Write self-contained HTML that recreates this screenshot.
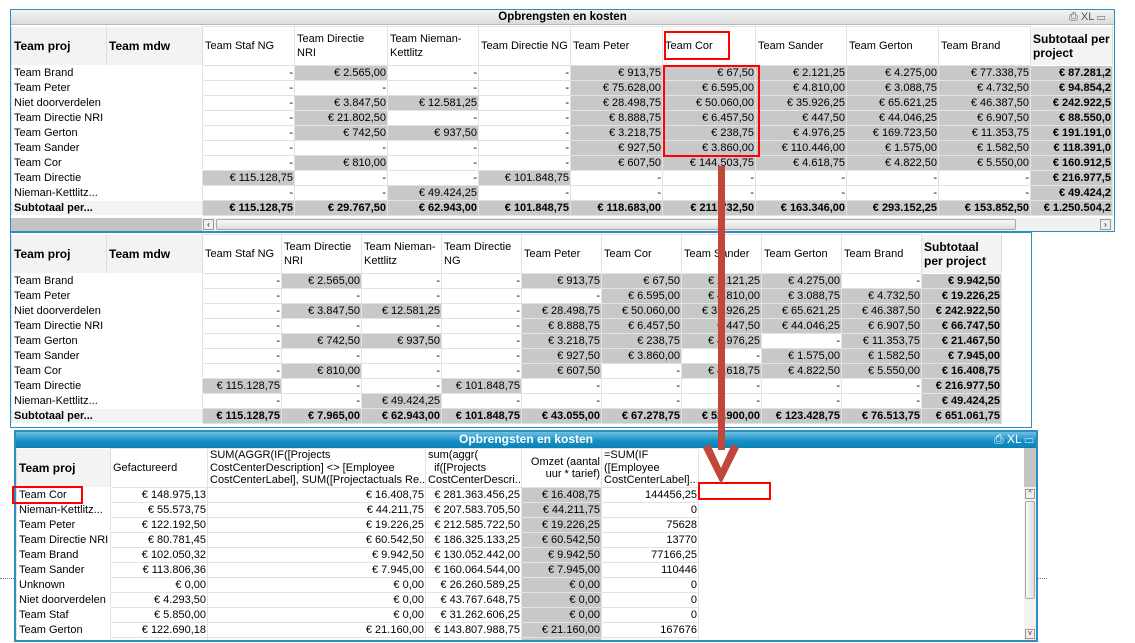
<!DOCTYPE html>
<html><head><meta charset="utf-8">
<style>
*{margin:0;padding:0;box-sizing:border-box}
body{width:1135px;height:643px;background:#fff;position:relative;overflow:hidden;font-family:"Liberation Sans",sans-serif;font-size:11px;color:#000}
.abs{position:absolute}
table{border-collapse:collapse;table-layout:fixed;position:absolute}
td{height:15px;line-height:14px;border:1px solid #e2e2e2;padding:0 1px;white-space:nowrap;overflow:hidden;text-align:right;background:#fff}
td.l{text-align:left;padding-left:2px;border-color:#fff #e2e2e2}
td.g{background:#c8c8c8;border-color:#e4e4e4}
td.b{font-weight:bold}
tr.h td{height:39px;text-align:left;vertical-align:middle;white-space:normal;line-height:14px;padding-left:2px;background:#fff}
tr.h td div{max-height:38px;overflow:hidden}
tr.h td.hh{background:#f3f3f3;font-weight:bold;font-size:12px;border-color:#fff #ddd}
tr.s td{font-weight:bold;background:#c8c8c8}
tr.s td.l{background:#f3f3f3}
.frame{position:absolute;border:1px solid #2a8fc0}
.red{position:absolute;border:2px solid #f00}
.t3 tr.h td div{white-space:nowrap;line-height:12.5px}
</style></head><body>

<!-- Table 1 -->
<div class="frame" style="left:10px;top:9px;width:1105px;height:223px"></div>
<div class="abs" style="left:11px;top:10px;width:1103px;height:15px;background:linear-gradient(#f4f4f4,#dcdcdc);border-bottom:1px solid #b8b8b8;text-align:center;font-weight:bold;font-size:11.5px;line-height:14px">Opbrengsten en kosten</div>
<div class="abs" style="left:1069px;top:10px;font-size:11px;color:#555;line-height:14px">⎙ XL ▭</div>
<table style="left:11px;top:26px;width:1101px">
<colgroup><col style="width:95px"><col style="width:96px"><col style="width:92px"><col style="width:93px"><col style="width:91px"><col style="width:92px"><col style="width:92px"><col style="width:93px"><col style="width:91px"><col style="width:92px"><col style="width:92px"><col style="width:82px"></colgroup>
<tr class="h"><td class="hh">Team proj</td><td class="hh">Team mdw</td><td>Team Staf NG</td><td>Team Directie NRI</td><td>Team Nieman-Kettlitz</td><td>Team Directie NG</td><td>Team Peter</td><td>Team Cor</td><td>Team Sander</td><td>Team Gerton</td><td>Team Brand</td><td class="hh">Subtotaal per project</td></tr>
<tr><td class="l" colspan="2">Team Brand</td><td>-</td><td class="g">€ 2.565,00</td><td>-</td><td>-</td><td class="g">€ 913,75</td><td class="g">€ 67,50</td><td class="g">€ 2.121,25</td><td class="g">€ 4.275,00</td><td class="g">€ 77.338,75</td><td class="g b">€ 87.281,2</td></tr>
<tr><td class="l" colspan="2">Team Peter</td><td>-</td><td>-</td><td>-</td><td>-</td><td class="g">€ 75.628,00</td><td class="g">€ 6.595,00</td><td class="g">€ 4.810,00</td><td class="g">€ 3.088,75</td><td class="g">€ 4.732,50</td><td class="g b">€ 94.854,2</td></tr>
<tr><td class="l" colspan="2">Niet doorverdelen</td><td>-</td><td class="g">€ 3.847,50</td><td class="g">€ 12.581,25</td><td>-</td><td class="g">€ 28.498,75</td><td class="g">€ 50.060,00</td><td class="g">€ 35.926,25</td><td class="g">€ 65.621,25</td><td class="g">€ 46.387,50</td><td class="g b">€ 242.922,5</td></tr>
<tr><td class="l" colspan="2">Team Directie NRI</td><td>-</td><td class="g">€ 21.802,50</td><td>-</td><td>-</td><td class="g">€ 8.888,75</td><td class="g">€ 6.457,50</td><td class="g">€ 447,50</td><td class="g">€ 44.046,25</td><td class="g">€ 6.907,50</td><td class="g b">€ 88.550,0</td></tr>
<tr><td class="l" colspan="2">Team Gerton</td><td>-</td><td class="g">€ 742,50</td><td class="g">€ 937,50</td><td>-</td><td class="g">€ 3.218,75</td><td class="g">€ 238,75</td><td class="g">€ 4.976,25</td><td class="g">€ 169.723,50</td><td class="g">€ 11.353,75</td><td class="g b">€ 191.191,0</td></tr>
<tr><td class="l" colspan="2">Team Sander</td><td>-</td><td>-</td><td>-</td><td>-</td><td class="g">€ 927,50</td><td class="g">€ 3.860,00</td><td class="g">€ 110.446,00</td><td class="g">€ 1.575,00</td><td class="g">€ 1.582,50</td><td class="g b">€ 118.391,0</td></tr>
<tr><td class="l" colspan="2">Team Cor</td><td>-</td><td class="g">€ 810,00</td><td>-</td><td>-</td><td class="g">€ 607,50</td><td class="g">€ 144.503,75</td><td class="g">€ 4.618,75</td><td class="g">€ 4.822,50</td><td class="g">€ 5.550,00</td><td class="g b">€ 160.912,5</td></tr>
<tr><td class="l" colspan="2">Team Directie</td><td class="g">€ 115.128,75</td><td>-</td><td>-</td><td class="g">€ 101.848,75</td><td>-</td><td>-</td><td>-</td><td>-</td><td>-</td><td class="g b">€ 216.977,5</td></tr>
<tr><td class="l" colspan="2">Nieman-Kettlitz...</td><td>-</td><td>-</td><td class="g">€ 49.424,25</td><td>-</td><td>-</td><td>-</td><td>-</td><td>-</td><td>-</td><td class="g b">€ 49.424,2</td></tr>
<tr class="s"><td class="l" colspan="2">Subtotaal per...</td><td>€ 115.128,75</td><td>€ 29.767,50</td><td>€ 62.943,00</td><td>€ 101.848,75</td><td>€ 118.683,00</td><td>€ 211.732,50</td><td>€ 163.346,00</td><td>€ 293.152,25</td><td>€ 153.852,50</td><td>€ 1.250.504,2</td></tr>
</table>
<div class="abs" style="left:11px;top:218px;width:191px;height:13px;background:#c4c4c4"></div>
<div class="abs" style="left:202px;top:218px;width:911px;height:13px;background:#f0f0f0"></div>
<div class="abs" style="left:203px;top:219px;width:11px;height:11px;border:1px solid #999;background:#eee;font-size:8px;line-height:9px;text-align:center">‹</div>
<div class="abs" style="left:216px;top:219px;width:800px;height:11px;border:1px solid #aaa;border-radius:2px;background:linear-gradient(#fafafa,#ddd)"></div>
<div class="abs" style="left:1100px;top:219px;width:11px;height:11px;border:1px solid #999;background:#eee;font-size:8px;line-height:9px;text-align:center">›</div>

<!-- Table 2 -->
<div class="frame" style="left:10px;top:232px;width:1022px;height:196px"></div>
<table style="left:11px;top:234px;width:990px">
<colgroup><col style="width:95px"><col style="width:96px"><col style="width:79px"><col style="width:80px"><col style="width:80px"><col style="width:80px"><col style="width:80px"><col style="width:80px"><col style="width:80px"><col style="width:80px"><col style="width:80px"><col style="width:80px"></colgroup>
<tr class="h"><td class="hh">Team proj</td><td class="hh">Team mdw</td><td>Team Staf NG</td><td>Team Directie NRI</td><td>Team Nieman-Kettlitz</td><td>Team Directie NG</td><td>Team Peter</td><td>Team Cor</td><td>Team Sander</td><td>Team Gerton</td><td>Team Brand</td><td class="hh">Subtotaal per project</td></tr>
<tr><td class="l" colspan="2">Team Brand</td><td>-</td><td class="g">€ 2.565,00</td><td>-</td><td>-</td><td class="g">€ 913,75</td><td class="g">€ 67,50</td><td class="g">€ 2.121,25</td><td class="g">€ 4.275,00</td><td>-</td><td class="g b">€ 9.942,50</td></tr>
<tr><td class="l" colspan="2">Team Peter</td><td>-</td><td>-</td><td>-</td><td>-</td><td>-</td><td class="g">€ 6.595,00</td><td class="g">€ 4.810,00</td><td class="g">€ 3.088,75</td><td class="g">€ 4.732,50</td><td class="g b">€ 19.226,25</td></tr>
<tr><td class="l" colspan="2">Niet doorverdelen</td><td>-</td><td class="g">€ 3.847,50</td><td class="g">€ 12.581,25</td><td>-</td><td class="g">€ 28.498,75</td><td class="g">€ 50.060,00</td><td class="g">€ 35.926,25</td><td class="g">€ 65.621,25</td><td class="g">€ 46.387,50</td><td class="g b">€ 242.922,50</td></tr>
<tr><td class="l" colspan="2">Team Directie NRI</td><td>-</td><td>-</td><td>-</td><td>-</td><td class="g">€ 8.888,75</td><td class="g">€ 6.457,50</td><td class="g">€ 447,50</td><td class="g">€ 44.046,25</td><td class="g">€ 6.907,50</td><td class="g b">€ 66.747,50</td></tr>
<tr><td class="l" colspan="2">Team Gerton</td><td>-</td><td class="g">€ 742,50</td><td class="g">€ 937,50</td><td>-</td><td class="g">€ 3.218,75</td><td class="g">€ 238,75</td><td class="g">€ 4.976,25</td><td>-</td><td class="g">€ 11.353,75</td><td class="g b">€ 21.467,50</td></tr>
<tr><td class="l" colspan="2">Team Sander</td><td>-</td><td>-</td><td>-</td><td>-</td><td class="g">€ 927,50</td><td class="g">€ 3.860,00</td><td>-</td><td class="g">€ 1.575,00</td><td class="g">€ 1.582,50</td><td class="g b">€ 7.945,00</td></tr>
<tr><td class="l" colspan="2">Team Cor</td><td>-</td><td class="g">€ 810,00</td><td>-</td><td>-</td><td class="g">€ 607,50</td><td>-</td><td class="g">€ 4.618,75</td><td class="g">€ 4.822,50</td><td class="g">€ 5.550,00</td><td class="g b">€ 16.408,75</td></tr>
<tr><td class="l" colspan="2">Team Directie</td><td class="g">€ 115.128,75</td><td>-</td><td>-</td><td class="g">€ 101.848,75</td><td>-</td><td>-</td><td>-</td><td>-</td><td>-</td><td class="g b">€ 216.977,50</td></tr>
<tr><td class="l" colspan="2">Nieman-Kettlitz...</td><td>-</td><td>-</td><td class="g">€ 49.424,25</td><td>-</td><td>-</td><td>-</td><td>-</td><td>-</td><td>-</td><td class="g b">€ 49.424,25</td></tr>
<tr class="s"><td class="l" colspan="2">Subtotaal per...</td><td>€ 115.128,75</td><td>€ 7.965,00</td><td>€ 62.943,00</td><td>€ 101.848,75</td><td>€ 43.055,00</td><td>€ 67.278,75</td><td>€ 52.900,00</td><td>€ 123.428,75</td><td>€ 76.513,75</td><td>€ 651.061,75</td></tr>
</table>

<!-- Table 3 -->
<div class="abs" style="left:0;top:578px;width:14px;border-top:1px dotted #5a7fa0"></div>
<div class="abs" style="left:1037px;top:578px;width:10px;border-top:1px dotted #5a7fa0"></div>
<div class="frame" style="left:14px;top:430px;width:1024px;height:212px;border-width:2px"></div>
<div class="abs" style="left:16px;top:432px;width:1020px;height:16px;background:linear-gradient(#6cc0e4,#1890c4 55%,#0a80b8);color:#fff;text-align:center;font-weight:bold;font-size:12px;line-height:15px">Opbrengsten en kosten</div>
<div class="abs" style="left:994px;top:432px;color:#fff;font-size:12px;line-height:15px">⎙ XL ▭</div>
<div class="abs" style="left:16px;top:448px;width:1008px;height:192px;overflow:hidden">
<table class="t3" style="left:0;top:0;width:682px">
<colgroup><col style="width:94px"><col style="width:97px"><col style="width:218px"><col style="width:96px"><col style="width:80px"><col style="width:97px"></colgroup>
<tr class="h"><td class="hh">Team proj</td><td>Gefactureerd</td><td><div>SUM(AGGR(IF([Projects<br>CostCenterDescription] &lt;&gt; [Employee<br>CostCenterLabel], SUM([Projectactuals Re...</div></td><td><div>sum(aggr(<br>&nbsp;&nbsp;if([Projects<br>CostCenterDescri...</div></td><td style="text-align:right"><div style="text-align:right">Omzet (aantal<br>uur * tarief)</div></td><td><div>=SUM(IF<br>([Employee<br>CostCenterLabel]...</div></td></tr>
<tr><td class="l">Team Cor</td><td>€ 148.975,13</td><td>€ 16.408,75</td><td>€ 281.363.456,25</td><td class="g">€ 16.408,75</td><td>144456,25</td></tr>
<tr><td class="l">Nieman-Kettlitz...</td><td>€ 55.573,75</td><td>€ 44.211,75</td><td>€ 207.583.705,50</td><td class="g">€ 44.211,75</td><td>0</td></tr>
<tr><td class="l">Team Peter</td><td>€ 122.192,50</td><td>€ 19.226,25</td><td>€ 212.585.722,50</td><td class="g">€ 19.226,25</td><td>75628</td></tr>
<tr><td class="l">Team Directie NRI</td><td>€ 80.781,45</td><td>€ 60.542,50</td><td>€ 186.325.133,25</td><td class="g">€ 60.542,50</td><td>13770</td></tr>
<tr><td class="l">Team Brand</td><td>€ 102.050,32</td><td>€ 9.942,50</td><td>€ 130.052.442,00</td><td class="g">€ 9.942,50</td><td>77166,25</td></tr>
<tr><td class="l">Team Sander</td><td>€ 113.806,36</td><td>€ 7.945,00</td><td>€ 160.064.544,00</td><td class="g">€ 7.945,00</td><td>110446</td></tr>
<tr><td class="l">Unknown</td><td>€ 0,00</td><td>€ 0,00</td><td>€ 26.260.589,25</td><td class="g">€ 0,00</td><td>0</td></tr>
<tr><td class="l">Niet doorverdelen</td><td>€ 4.293,50</td><td>€ 0,00</td><td>€ 43.767.648,75</td><td class="g">€ 0,00</td><td>0</td></tr>
<tr><td class="l">Team Staf</td><td>€ 5.850,00</td><td>€ 0,00</td><td>€ 31.262.606,25</td><td class="g">€ 0,00</td><td>0</td></tr>
<tr><td class="l">Team Gerton</td><td>€ 122.690,18</td><td>€ 21.160,00</td><td>€ 143.807.988,75</td><td class="g">€ 21.160,00</td><td>167676</td></tr>
<tr><td class="l"></td><td></td><td></td><td></td><td class="g"></td><td></td></tr>
</table>
</div>
<div class="abs" style="left:1024px;top:448px;width:12px;height:39px;background:#c4c4c4"></div>
<div class="abs" style="left:1024px;top:487px;width:12px;height:153px;background:#f2f2f2"></div>
<div class="abs" style="left:1025px;top:489px;width:10px;height:10px;border:1px solid #999;background:#eee;font-size:7px;line-height:8px;text-align:center;color:#800">^</div>
<div class="abs" style="left:1025px;top:501px;width:10px;height:98px;border:1px solid #aaa;border-radius:2px;background:linear-gradient(90deg,#fafafa,#ddd)"></div>
<div class="abs" style="left:1025px;top:629px;width:10px;height:10px;border:1px solid #999;background:#eee;font-size:7px;line-height:8px;text-align:center;color:#800">v</div>

<!-- red markers -->
<div class="red" style="left:664px;top:31px;width:66px;height:29px"></div>
<div class="red" style="left:663px;top:65px;width:97px;height:92px"></div>
<div class="red" style="left:12px;top:486px;width:71px;height:18px"></div>
<div class="red" style="left:698px;top:482px;width:73px;height:18px"></div>

<!-- arrow -->
<svg class="abs" style="left:0;top:0" width="1135" height="643">
<rect x="718" y="166" width="7" height="284" fill="#c0473a"/>
<polygon points="703,448 710,444 721,468 732,444 739,448 721,484" fill="#c0473a"/>
</svg>
</body></html>
